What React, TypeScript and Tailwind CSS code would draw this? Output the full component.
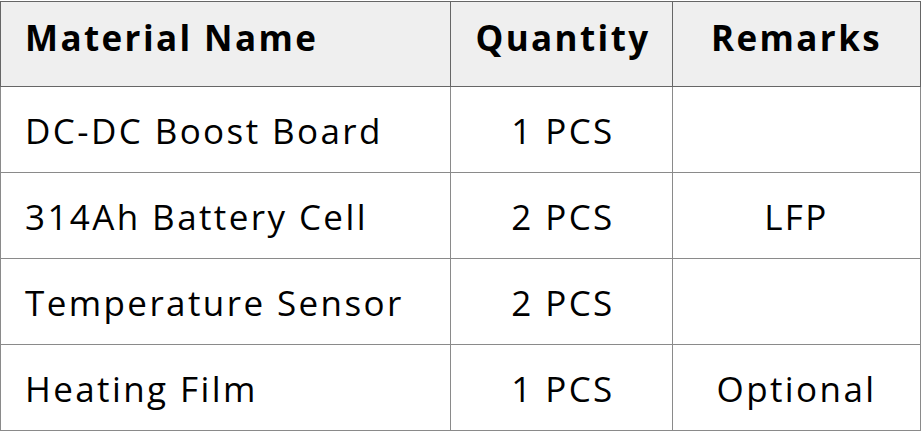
const rows = [
  { name: "DC-DC Boost Board", qty: "1 PCS", remark: "" },
  { name: "314Ah Battery Cell", qty: "2 PCS", remark: "LFP" },
  { name: "Temperature Sensor", qty: "2 PCS", remark: "" },
  { name: "Heating Film", qty: "1 PCS", remark: "Optional" },
];

export default function App() {
  return (
    <div className="bg-white w-[922px] h-[431px] pt-px" style={{ fontFamily: '"Open Sans", sans-serif' }}>
      <table className="border-collapse w-[920px] table-fixed text-black text-[35px] tracking-[2.4px]">
        <colgroup>
          <col className="w-[450px]" />
          <col className="w-[222px]" />
          <col className="w-[248px]" />
        </colgroup>
        <thead>
          <tr className="h-[85px] bg-[#efefef]">
            <th className="border border-[#666] text-left pl-6 pb-3 font-bold">Material Name</th>
            <th className="border border-[#666] text-center pl-[3px] pb-3 font-bold">Quantity</th>
            <th className="border border-[#666] text-center pb-3 font-bold">Remarks</th>
          </tr>
        </thead>
        <tbody>
          {rows.map((r, i) => (
            <tr key={i} className="h-[86px]">
              <td className="border border-[#8a8a8a] text-left pl-6 pt-1">{r.name}</td>
              <td className="border border-[#8a8a8a] text-center pl-[3px] pt-1">{r.qty}</td>
              <td className="border border-[#8a8a8a] text-center pt-1">{r.remark}</td>
            </tr>
          ))}
        </tbody>
      </table>
    </div>
  );
}
